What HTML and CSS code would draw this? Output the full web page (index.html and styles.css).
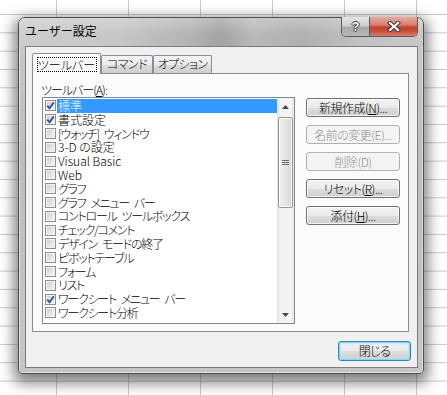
FILE: index.html
```html
<!DOCTYPE html>
<html lang="ja">
<head>
<meta charset="utf-8">
<title>ユーザー設定</title>
<link rel="stylesheet" href="styles.css">
</head>
<body>
<div class="dialog">
  <div class="titlebar">
    <span class="title">ユーザー設定</span>
    <div class="caption-btns">
      <div class="cbtn help"><span class="qmark">?</span></div>
      <div class="cbtn close">
        <svg width="14" height="11" viewBox="0 0 14 11">
          <path d="M3 2 L11 9 M11 2 L3 9" stroke="#3a3a3a" stroke-width="4.2" stroke-linecap="square" fill="none"/>
          <path d="M3 2 L11 9 M11 2 L3 9" stroke="#ffffff" stroke-width="2.2" stroke-linecap="square" fill="none"/>
        </svg>
      </div>
    </div>
  </div>
  <div class="client">
    <div class="tabs">
      <div class="tab tab-1 active"><span class="focus">ツールバー</span></div>
      <div class="tab tab-2">コマンド</div>
      <div class="tab tab-3">オプション</div>
    </div>
    <div class="panel">
      <div class="label">ツールバー(<u>A</u>):</div>
      <div class="panel-body">
        <div class="listbox">
          <ul class="items">
            <li class="item checked selected"><span class="cb"><svg width="9" height="9" viewBox="0 0 9 9"><path d="M1.2 4.6 L3.5 7.2 L7.8 1.4" stroke="#3b4d99" stroke-width="1.8" fill="none"/></svg></span><span class="txt">標準</span></li>
            <li class="item checked"><span class="cb"><svg width="9" height="9" viewBox="0 0 9 9"><path d="M1.2 4.6 L3.5 7.2 L7.8 1.4" stroke="#3b4d99" stroke-width="1.8" fill="none"/></svg></span><span class="txt">書式設定</span></li>
            <li class="item"><span class="cb"></span><span class="txt kana">[ウォッチ] ウィンドウ</span></li>
            <li class="item"><span class="cb"></span><span class="txt">3-D の設定</span></li>
            <li class="item"><span class="cb"></span><span class="txt">Visual Basic</span></li>
            <li class="item"><span class="cb"></span><span class="txt">Web</span></li>
            <li class="item"><span class="cb"></span><span class="txt kana">グラフ</span></li>
            <li class="item"><span class="cb"></span><span class="txt kana">グラフ メニュー バー</span></li>
            <li class="item"><span class="cb"></span><span class="txt kana">コントロール ツールボックス</span></li>
            <li class="item"><span class="cb"></span><span class="txt kana">チェック/コメント</span></li>
            <li class="item"><span class="cb"></span><span class="txt kana">デザイン モードの終了</span></li>
            <li class="item"><span class="cb"></span><span class="txt kana">ピボットテーブル</span></li>
            <li class="item"><span class="cb"></span><span class="txt kana">フォーム</span></li>
            <li class="item"><span class="cb"></span><span class="txt kana">リスト</span></li>
            <li class="item checked"><span class="cb"><svg width="9" height="9" viewBox="0 0 9 9"><path d="M1.2 4.6 L3.5 7.2 L7.8 1.4" stroke="#3b4d99" stroke-width="1.8" fill="none"/></svg></span><span class="txt kana">ワークシート メニュー バー</span></li>
            <li class="item"><span class="cb"></span><span class="txt kana">ワークシート分析</span></li>
          </ul>
          <div class="scrollbar">
            <div class="sb-btn"><svg width="7" height="4" viewBox="0 0 7 4"><path d="M0 4 L3.5 0 L7 4 Z" fill="#4a4a4a"/></svg></div>
            <div class="thumb"><svg width="7" height="7" viewBox="0 0 7 7"><path d="M0 1.5 H7 M0 3.5 H7 M0 5.5 H7" stroke="#6e6e6e" stroke-width="1"/></svg></div>
            <div class="sb-track"></div>
            <div class="sb-btn"><svg width="7" height="4" viewBox="0 0 7 4"><path d="M0 0 L7 0 L3.5 4 Z" fill="#4a4a4a"/></svg></div>
          </div>
        </div>
        <div class="actions">
          <button class="btn">新規作成(<u>N</u>)...</button>
          <button class="btn" disabled>名前の変更(E)...</button>
          <button class="btn" disabled>削除(D)</button>
          <button class="btn">リセット(<u>R</u>)...</button>
          <button class="btn">添付(<u>H</u>)...</button>
        </div>
      </div>
    </div>
    <div class="footer">
      <button class="btn btn-default">閉じる</button>
    </div>
  </div>
</div>
</body>
</html>
```

FILE: styles.css
```css
html, body {
  margin: 0;
  padding: 0;
}

body {
  width: 447px;
  height: 395px;
  overflow: hidden;
  position: relative;
  font-family: "Noto Sans CJK JP", "Noto Sans", sans-serif;
  font-size: 12px;
  font-weight: 300;
  color: #000;
  background-color: #ffffff;
  background-image:
    linear-gradient(to right, #c8c8c8 1px, transparent 1px),
    linear-gradient(to bottom, #c8c8c8 1px, transparent 1px);
  background-size: 72px 100%, 100% 18.33px;
  background-position: 56px 0, 0 14px;
}

/* ---------- window ---------- */
.dialog {
  position: absolute;
  left: 18px;
  top: 17px;
  width: 406px;
  height: 357px;
  box-sizing: border-box;
  border: 1px solid #4e4e4e;
  border-radius: 7px 7px 4px 4px;
  background: linear-gradient(to bottom, #c9c9c9 0%, #bdbdbd 40%, #c6c6c6 100%);
  box-shadow: 0 5px 14px 4px rgba(0, 0, 0, 0.5), inset 0 0 0 1px rgba(255, 255, 255, 0.45);
  display: flex;
  flex-direction: column;
}

.titlebar {
  height: 28px;
  flex: none;
  display: flex;
  align-items: flex-start;
  padding: 0 5px 0 6px;
  border-radius: 6px 6px 0 0;
  background:
    linear-gradient(to bottom, rgba(255, 255, 255, 0.25), rgba(255, 255, 255, 0) 60%),
    linear-gradient(to right, #cdcdcd 0%, #c6c6c6 25%, #b4b4b4 42%, #a3a3a3 50%, #b9b9b9 58%, #b0b0b0 70%, #c2c2c2 85%, #c8c8c8 100%);
}

.title {
  margin-top: 5px;
  font-size: 12px;
  font-weight: 400;
  line-height: 16px;
  color: #000;
}

.caption-btns {
  margin-left: auto;
  margin-top: -1px;
  display: flex;
  height: 20px;
  box-sizing: border-box;
  border: 1px solid #5b5b5b;
  border-top: none;
  border-radius: 0 0 5px 5px;
  overflow: hidden;
}

.cbtn {
  display: flex;
  align-items: center;
  justify-content: center;
  height: 100%;
}

.help {
  width: 27px;
  border-right: 1px solid #5b5b5b;
  background: linear-gradient(to bottom, #e4e4e4 0%, #d0d0d0 45%, #a9a9a9 55%, #b8b8b8 100%);
}

.qmark {
  font-family: "Liberation Sans", sans-serif;
  font-weight: bold;
  font-size: 13px;
  line-height: 13px;
  color: #f4f4f4;
  text-shadow: 1px 0 0 #3c3c3c, -1px 0 0 #3c3c3c, 0 1px 0 #3c3c3c, 0 -1px 0 #3c3c3c;
}

.close {
  width: 47px;
  background: linear-gradient(to bottom, #e6aa9d 0%, #d98170 40%, #c4422c 55%, #c9503b 75%, #d8806e 100%);
}

/* ---------- client area ---------- */
.client {
  flex: 1;
  margin: 0 5px 5px 6px;
  border: 1px solid #7c7c7c;
  background: #f0f0f0;
  display: flex;
  flex-direction: column;
  padding-top: 6px;
}

.tabs {
  display: flex;
  align-items: flex-end;
  height: 20px;
  margin-left: 6px;
}

.tab {
  box-sizing: border-box;
  height: 18px;
  border: 1px solid #898c95;
  border-bottom: none;
  border-radius: 2px 2px 0 0;
  background: linear-gradient(to bottom, #f3f3f3 0%, #ebebeb 50%, #dddddd 51%, #cfcfcf 100%);
  font-size: 12px;
  line-height: 16px;
  text-align: center;
  letter-spacing: -0.6px;
  font-feature-settings: "palt" 1;
}

.tab-1 { width: 69px; }
.tab-2 { width: 52px; }
.tab-3 { width: 59px; }

.tab.active {
  height: 21px;
  margin-bottom: -1px;
  position: relative;
  z-index: 1;
  background: #fbfbfb;
  padding-top: 3px;
  letter-spacing: 0;
}

.focus {
  display: inline-block;
  box-sizing: border-box;
  width: 60px;
  height: 15px;
  line-height: 13px;
  border: 1px dotted #000;
}

.panel {
  box-sizing: border-box;
  height: 259px;
  margin: 0 8px 0 6px;
  border: 1px solid #898c95;
  background: #fbfbfb;
  padding: 8px 8px 0 8px;
}

.label {
  line-height: 15px;
  height: 15px;
  letter-spacing: -1px;
  font-feature-settings: "palt" 1;
}

.label u, .btn u {
  text-decoration: underline;
  text-underline-offset: 1px;
}

.panel-body {
  display: flex;
  align-items: flex-start;
  margin-left: 1px;
}

/* ---------- listbox ---------- */
.listbox {
  box-sizing: border-box;
  width: 253px;
  height: 227px;
  border: 1px solid #828790;
  background: #fff;
  display: flex;
}

.items {
  list-style: none;
  margin: 0;
  padding: 1px 0 0 0;
  flex: 1;
  overflow: hidden;
}

.item {
  height: 13.8px;
  display: flex;
  align-items: center;
  font-feature-settings: "palt" 1;
}

.cb {
  box-sizing: border-box;
  flex: none;
  width: 11px;
  height: 11px;
  margin-left: 2px;
  border: 1px solid #8e8f8f;
  background: linear-gradient(135deg, #c9cbcf 0%, #e6e7e9 60%, #f3f3f3 100%);
  box-shadow: inset 0 0 0 1px #f4f4f4;
  display: flex;
  align-items: center;
  justify-content: center;
}

.cb svg {
  display: block;
}

.txt {
  flex: 1;
  margin-left: 1px;
  padding-left: 1px;
  height: 13.8px;
  line-height: 13.8px;
  white-space: pre;
}

.txt.kana {
  letter-spacing: -1.25px;
  word-spacing: 3.5px;
}

.selected .txt {
  background: #3399ff;
  color: #fff;
}

/* ---------- scrollbar ---------- */
.scrollbar {
  width: 17px;
  flex: none;
  display: flex;
  flex-direction: column;
  background: linear-gradient(to right, #e2e2e2 0%, #f2f2f2 20%, #f4f4f4 80%, #e6e6e6 100%);
}

.sb-btn {
  height: 17px;
  flex: none;
  display: flex;
  align-items: center;
  justify-content: center;
}

.thumb {
  box-sizing: border-box;
  height: 91px;
  margin: 2px 1px 0 1px;
  border: 1px solid #979797;
  border-radius: 2px;
  background: linear-gradient(to right, #f0f0f0 0%, #e6e6e6 50%, #d6d6d6 100%);
  box-shadow: inset 0 0 0 1px rgba(255, 255, 255, 0.8);
  display: flex;
  align-items: center;
  justify-content: center;
}

.sb-track {
  flex: 1;
}

/* ---------- buttons ---------- */
.actions {
  display: flex;
  flex-direction: column;
  gap: 8px;
  margin-left: 11px;
  margin-top: 1px;
}

.btn {
  box-sizing: border-box;
  width: 94px;
  height: 19px;
  padding: 0;
  margin: 0;
  border: 1px solid #707070;
  border-radius: 3px;
  background: linear-gradient(to bottom, #f2f2f2 0%, #ebebeb 50%, #dddddd 51%, #cfcfcf 100%);
  box-shadow: inset 0 0 0 1px rgba(255, 255, 255, 0.75);
  font-family: "Noto Sans CJK JP", "Noto Sans", sans-serif;
  font-size: 12px;
  font-weight: 300;
  line-height: 16px;
  letter-spacing: -0.5px;
  color: #000;
  text-align: center;
  font-feature-settings: "palt" 1;
}

.btn:disabled {
  border-color: #adb2b5;
  background: #f4f4f4;
  box-shadow: none;
  color: #8e8e8e;
}

.footer {
  display: flex;
  justify-content: flex-end;
  padding: 9px 6px 0 0;
}

.btn-default {
  width: 73px;
  height: 20px;
  border-color: #3c7fb1;
  box-shadow: inset 0 0 0 1px #7fd7f7, inset 0 0 2px 2px rgba(180, 230, 250, 0.7);
}
```
